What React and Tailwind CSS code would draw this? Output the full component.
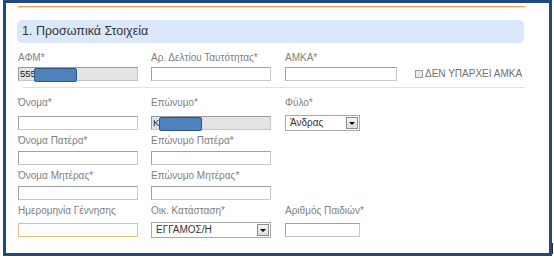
import React from 'react';

const font = { fontFamily: '"Liberation Sans", Arial, sans-serif' };

const Label = ({ children, className = '' }) => (
    <div className={`h-[12px] text-[10px] leading-[12px] text-[#808080] whitespace-nowrap ${className}`}>
        {children}
    </div>
);

const Input = ({ w = 'w-[120px]', gray = false, focus = false, value, redact }) => (
    <div
        className={`relative h-[14px] ${w} border text-[9.5px] leading-[12px] pl-[1px] text-[#222] ${
            focus
                ? 'border-[#e3c27d] bg-white'
                : gray
                    ? 'border-[#c4c4c4] border-t-[#9a9a9a] border-l-[#9a9a9a] bg-[#e4e4e4]'
                    : 'border-[#c8c8c8] border-t-[#a0a0a0] border-l-[#a0a0a0] bg-white'
        }`}
    >
        {value}
        {redact && (
            <div className={`absolute top-[0px] h-[14px] ${redact} rounded-[2px] border border-[#2f5683] bg-[#4f81bd]`} />
        )}
    </div>
);

const Select = ({ w, value }) => (
    <div className={`flex h-[16px] ${w} items-center border border-[#a8a8a8] bg-white text-[10px] text-[#333]`}>
        <span className="flex-1 pl-[4px] leading-[14px]">{value}</span>
        <span className="mr-[1px] flex h-[12px] w-[12px] items-center justify-center border border-[#8c8c8c] bg-gradient-to-b from-[#f6f6f6] to-[#dcdcdc]">
            <span className="h-0 w-0 border-x-[3px] border-t-[3px] border-x-transparent border-t-black" />
        </span>
    </div>
);

const Row = ({ className = '', children }) => (
    <div className={`ml-[12px] grid grid-cols-[133px_134px_1fr] ${className}`}>{children}</div>
);

export default function App() {
    return (
        <div className="relative h-[258px] w-[554px] overflow-hidden bg-white" style={font}>
            <div className="ml-[3px] h-[256px] w-[549px] border-[3px] border-[#1f4a7d] bg-white">
                {/* orange rule */}
                <div className="ml-[12px] mt-[3px] w-[507px]">
                    <div className="h-[1px] bg-[#f5a55a]" />
                    <div className="h-[1px] bg-[#fbd5ad]" />
                </div>

                {/* section header */}
                <div className="ml-[11px] mt-[12px] flex h-[23px] w-[507px] items-center rounded-[5px] bg-[#dbe8fb] pl-[5px] text-[12.5px] text-[#333]">
                    1. Προσωπικά Στοιχεία
                </div>

                {/* row 1 */}
                <Row className="mt-[9px]">
                    <div>
                        <Label>ΑΦΜ*</Label>
                        <div className="mt-[3px]"><Input gray value="555" redact="left-[15px] w-[43px]" /></div>
                    </div>
                    <div>
                        <Label>Αρ. Δελτίου Ταυτότητας*</Label>
                        <div className="mt-[3px]"><Input /></div>
                    </div>
                    <div>
                        <Label>ΑΜΚΑ*</Label>
                        <div className="mt-[3px] flex items-center">
                            <Input w="w-[112px]" />
                            <span className="ml-[18px] h-[8px] w-[8px] border border-[#9c9c9c] bg-[#e8e8e8]" />
                            <span className="ml-[2px] text-[10px] leading-[12px] text-[#707070]">ΔΕΝ ΥΠΑΡΧΕΙ ΑΜΚΑ</span>
                        </div>
                    </div>
                </Row>

                <div className="ml-[17px] mt-[6px] h-[1px] w-[502px] bg-[#d5e3f4]" />

                {/* row 2 */}
                <Row className="mt-[9px]">
                    <div>
                        <Label>Όνομα*</Label>
                        <div className="mt-[7px]"><Input /></div>
                    </div>
                    <div>
                        <Label>Επώνυμο*</Label>
                        <div className="mt-[7px]"><Input gray value="K" redact="left-[7px] w-[43px]" /></div>
                    </div>
                    <div>
                        <Label>Φύλο*</Label>
                        <div className="mt-[6px]"><Select w="w-[75px]" value="Άνδρας" /></div>
                    </div>
                </Row>

                {/* row 3 */}
                <Row className="mt-[4px]">
                    <div>
                        <Label>Όνομα Πατέρα*</Label>
                        <div className="mt-[4px]"><Input /></div>
                    </div>
                    <div>
                        <Label>Επώνυμο Πατέρα*</Label>
                        <div className="mt-[4px]"><Input /></div>
                    </div>
                </Row>

                {/* row 4 */}
                <Row className="mt-[5px]">
                    <div>
                        <Label>Όνομα Μητέρας*</Label>
                        <div className="mt-[4px]"><Input /></div>
                    </div>
                    <div>
                        <Label>Επώνυμο Μητέρας*</Label>
                        <div className="mt-[4px]"><Input /></div>
                    </div>
                </Row>

                {/* row 5 */}
                <Row className="mt-[5px]">
                    <div>
                        <Label>Ημερομηνία Γέννησης</Label>
                        <div className="mt-[6px]"><Input focus /></div>
                    </div>
                    <div>
                        <Label>Οικ. Κατάσταση*</Label>
                        <div className="mt-[5px]"><Select w="w-[120px]" value="ΕΓΓΑΜΟΣ/Η" /></div>
                    </div>
                    <div>
                        <Label>Αριθμός Παιδιών*</Label>
                        <div className="mt-[6px]"><Input w="w-[75px]" /></div>
                    </div>
                </Row>
            </div>
            <div className="absolute left-[552px] top-[243px] h-[11px] w-[1px] bg-[#3a2a10]" />
        </div>
    );
}
